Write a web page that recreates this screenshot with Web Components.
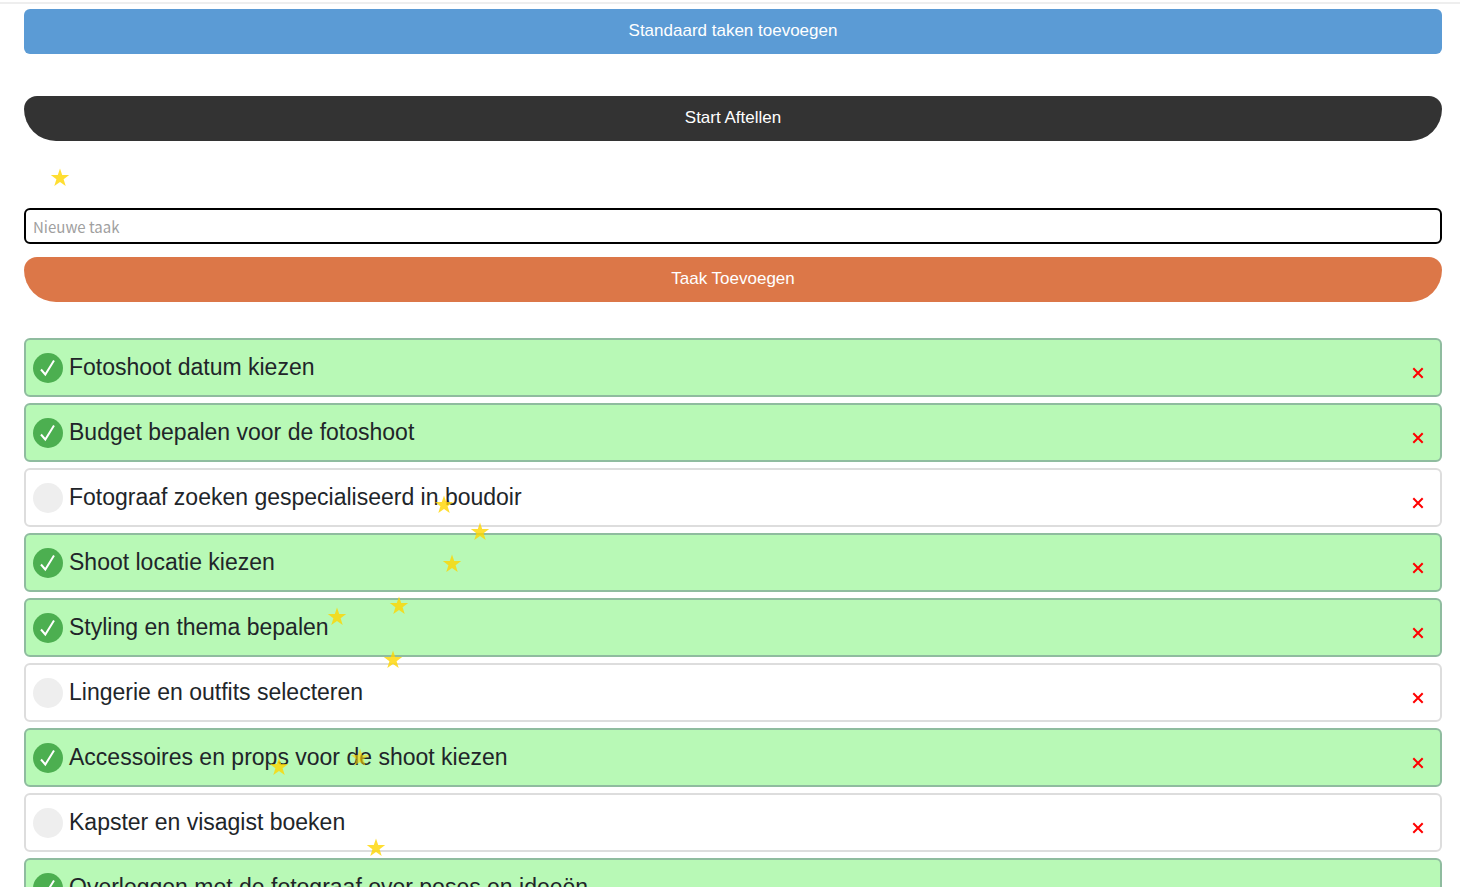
<!DOCTYPE html>
<html lang="nl">
<head>
<meta charset="utf-8">
<title>Takenlijst</title>
<style>
  body { margin: 0; background: #fff; color: #212529; font-family: "Liberation Sans", Arial, sans-serif; }
</style>
</head>
<body>
<task-page>
  <action-button style="--bg: #5b9bd5; --radius: 6px">Standaard taken toevoegen</action-button>
  <action-button slot="countdown" style="--bg: #333">Start Aftellen</action-button>
  <task-form slot="form"></task-form>
  <task-item slot="list" done>Fotoshoot datum kiezen</task-item>
  <task-item slot="list" done>Budget bepalen voor de fotoshoot</task-item>
  <task-item slot="list">Fotograaf zoeken gespecialiseerd in boudoir</task-item>
  <task-item slot="list" done>Shoot locatie kiezen</task-item>
  <task-item slot="list" done>Styling en thema bepalen</task-item>
  <task-item slot="list">Lingerie en outfits selecteren</task-item>
  <task-item slot="list" done>Accessoires en props voor de shoot kiezen</task-item>
  <task-item slot="list">Kapster en visagist boeken</task-item>
  <task-item slot="list" done>Overleggen met de fotograaf over poses en ideeën</task-item>
</task-page>
<star-trail points="60,178 444,505 480,532 452,564 399,606 337,617 393,660 279,767 360,758,0.6 376,848"></star-trail>

<script>
class Base extends HTMLElement {
  constructor() {
    super();
    this.attachShadow({ mode: "open" }).innerHTML = this.constructor.markup;
  }
}

customElements.define("action-button", class extends Base {
  static markup = `
    <style>
      :host { display: block; }
      button {
        display: block; width: 100%; height: 45px; border: 0; padding: 0 16px 1px;
        border-radius: var(--radius, 13px 13px 32px 32px);
        background: var(--bg); color: #fff; font: 17px/24px "Liberation Sans", Arial, sans-serif;
      }
    </style>
    <button type="button"><slot></slot></button>`;
});

customElements.define("task-form", class extends Base {
  static markup = `
    <style>
      :host { display: block; }
      form { display: flex; flex-direction: column; gap: 13px; margin: 0; }
      input {
        box-sizing: border-box; width: 100%; height: 36px; padding: 0 7px;
        border: 2px solid #000; border-radius: 6px; outline: 0; background: #fff;
        font: 15px/24px "Noto Sans CJK SC", "Noto Sans", sans-serif; color: #212529;
      }
      input::placeholder { color: #a0a0a0; opacity: 1; }
    </style>
    <form>
      <input type="text" placeholder="Nieuwe taak" aria-label="Nieuwe taak">
      <action-button style="--bg: #dc7748">Taak Toevoegen</action-button>
    </form>`;
});

customElements.define("task-item", class extends Base {
  static markup = `
    <style>
      :host {
        box-sizing: border-box; display: flex; align-items: center; height: 59px;
        padding: 0 16px 0 7px; border: 2px solid #ddd; border-radius: 6px; background: #fff;
      }
      :host([done]) { background: #b8f9b6; border-color: #8fbc9f; }
      label { flex: 1; display: flex; align-items: center; gap: 6px; font-size: 23px; line-height: 32px; }
      .text { padding-bottom: 2px; }
      .tick { display: grid; width: 30px; height: 30px; }
      .tick > * { grid-area: 1 / 1; }
      input { appearance: none; margin: 0; width: 30px; height: 30px; border-radius: 50%; background: #eee; }
      input:checked { background: #4caf50; }
      svg { display: block; pointer-events: none; }
      .tick svg { visibility: hidden; position: relative; }
      :host([done]) .tick svg { visibility: visible; }
      button { border: 0; padding: 10px 0 0; background: none; }
    </style>
    <label>
      <span class="tick">
        <input type="checkbox">
        <svg width="30" height="30" viewBox="0 0 30 30" fill="none" stroke="#fff"><path d="M8 16.500L12.300 21.500L21 7.500" stroke-width="2"/></svg>
      </span>
      <span class="text"><slot></slot></span>
    </label>
    <button type="button" aria-label="Verwijderen">
      <svg width="12" height="12" viewBox="0 0 12 12" stroke="#f00" stroke-width="2"><path d="M1.300 1.300L10.700 10.700M10.700 1.300L1.300 10.700"/></svg>
    </button>`;
  connectedCallback() {
    const box = this.shadowRoot.querySelector("input");
    box.checked = this.hasAttribute("done");
    box.addEventListener("change", () => this.toggleAttribute("done", box.checked));
    this.shadowRoot.querySelector("button").addEventListener("click", () => this.remove());
  }
});

customElements.define("task-page", class extends Base {
  static markup = `
    <style>
      :host { display: block; padding-top: 2px; }
      hr { margin: 0 0 5px; border: 0; height: 2px; background: #eee; }
      main { padding: 0 18px 24px 24px; }
      .countdown { padding: 42px 0 67px; }
      .list { display: flex; flex-direction: column; gap: 6px; padding-top: 36px; }
    </style>
    <hr>
    <main>
      <slot></slot>
      <div class="countdown"><slot name="countdown"></slot></div>
      <slot name="form"></slot>
      <div class="list"><slot name="list"></slot></div>
    </main>`;
});

customElements.define("star-trail", class extends Base {
  static markup = `
    <style>
      :host { position: absolute; left: 0; top: 0; width: 0; height: 0; pointer-events: none; }
      svg { position: absolute; width: 20px; height: 20px; margin: -10px 0 0 -10px; fill: #ffd700; }
    </style>`;
  connectedCallback() {
    this.shadowRoot.innerHTML += this.getAttribute("points").split(" ").map(point => {
      const [x, y, opacity = 0.8] = point.split(",");
      return `<svg viewBox="0 0 20 20" style="left:${x}px;top:${y}px;opacity:${opacity}"><path d="M10 0.500L12.200 7.100H19.200L13.600 11.200L15.700 18L10 13.900L4.300 18L6.400 11.200L0.800 7.100H7.800Z"/></svg>`;
    }).join("");
  }
});
</script>
</body>
</html>
